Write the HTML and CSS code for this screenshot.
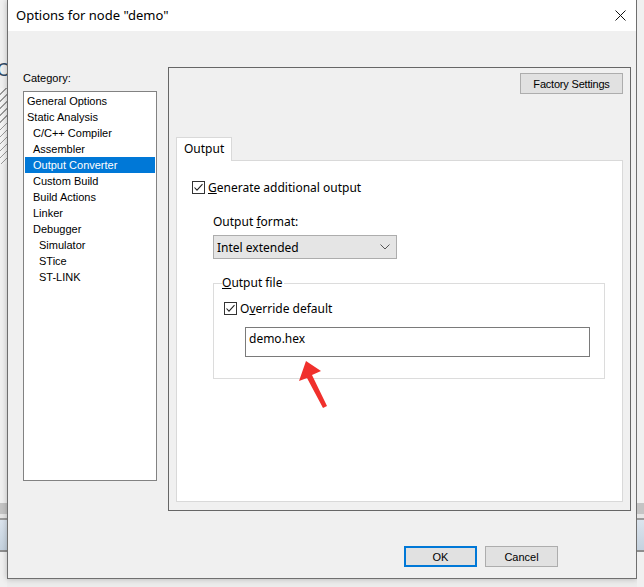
FILE: index.html
```html
<!DOCTYPE html>
<html>
<head>
<meta charset="utf-8">
<link rel="stylesheet" href="styles.css">
</head>
<body>
<div class="desk desk-left"><span class="desk-c">C</span><div class="hatch"></div></div>
<div class="dialog">
  <div class="titlebar">
    <span class="title">Options for node "demo"</span>
    <svg class="close" width="11" height="11" viewBox="0 0 11 11"><path d="M0.5 0.5 L10.5 10.5 M10.5 0.5 L0.5 10.5" stroke="#111" stroke-width="1" fill="none"/></svg>
  </div>
  <div class="body">
    <div class="main">
      <div class="leftcol">
        <div class="cat-label">Category:</div>
        <ul class="catlist">
          <li class="l0">General Options</li>
          <li class="l0">Static Analysis</li>
          <li class="l1">C/C++ Compiler</li>
          <li class="l1">Assembler</li>
          <li class="l1 sel">Output Converter</li>
          <li class="l1">Custom Build</li>
          <li class="l1">Build Actions</li>
          <li class="l1">Linker</li>
          <li class="l1">Debugger</li>
          <li class="l2">Simulator</li>
          <li class="l2">STice</li>
          <li class="l2">ST-LINK</li>
        </ul>
      </div>
      <div class="frame">
        <div class="frame-top"><button class="btn">Factory Settings</button></div>
        <div class="tabs"><div class="tab">Output</div></div>
        <div class="page">
          <label class="check first">
            <svg class="cb" width="13" height="13" viewBox="0 0 13 13"><rect x="0.5" y="0.5" width="12" height="12" fill="#fff" stroke="#333"/><path d="M2.5 6.5 L5 9.2 L10.5 3.2" stroke="#222" stroke-width="1.1" fill="none"/></svg>
            <span><u>G</u>enerate additional output</span>
          </label>
          <div class="fmt-label">Output <u>f</u>ormat:</div>
          <div class="combo"><span>Intel extended</span><svg width="10" height="6" viewBox="0 0 10 6"><path d="M0.5 0.5 L5 5 L9.5 0.5" stroke="#555" fill="none"/></svg></div>
          <fieldset class="group">
            <legend><u>O</u>utput file</legend>
            <label class="check">
              <svg class="cb" width="13" height="13" viewBox="0 0 13 13"><rect x="0.5" y="0.5" width="12" height="12" fill="#fff" stroke="#333"/><path d="M2.5 6.5 L5 9.2 L10.5 3.2" stroke="#222" stroke-width="1.1" fill="none"/></svg>
              <span>O<u>v</u>erride default</span>
            </label>
            <div class="textbox">demo.hex</div>
          </fieldset>
        </div>
      </div>
    </div>
    <div class="buttons">
      <button class="btn ok">OK</button>
      <button class="btn">Cancel</button>
    </div>
  </div>
  <svg class="arrow" width="40" height="56" viewBox="0 0 40 56"><polygon points="10,1 3,21 11,18 27,48 31,46 16,15 25,11" fill="#f0302c"/></svg>
</div>
<div class="desk desk-right"></div>
</body>
</html>
```

FILE: styles.css
```css
* { box-sizing: border-box; }
html, body { margin: 0; padding: 0; }
body {
  width: 644px;
  height: 587px;
  overflow: hidden;
  display: flex;
  align-items: flex-start;
  background: #ececec;
  font-family: "Noto Sans", "Liberation Sans", sans-serif;
  font-size: 12px;
  color: #000;
}
.desk {
  height: 587px;
  flex: 1 1 auto;
  position: relative;
  overflow: hidden;
  background:
    linear-gradient(to bottom,
      transparent 0, transparent 503px,
      #c4c4c4 503px, #c4c4c4 514px,
      #e6e6e6 514px, #e6e6e6 518px,
      #9a9a9a 518px, #9a9a9a 520px,
      #dbe4ee 520px, #c5d2df 550px,
      #8e8e8e 550px, #8e8e8e 552px,
      transparent 552px),
    #f0f0f0;
}
.desk-left { width: 7px; flex: 0 0 7px; }
.desk-c {
  position: absolute;
  left: -3px;
  top: 60px;
  font-size: 18px;
  color: #2f4a66;
  font-family: "Liberation Sans", sans-serif;
}
.hatch {
  position: absolute;
  left: 0;
  top: 88px;
  width: 7px;
  height: 76px;
  background: repeating-linear-gradient(135deg, #f4f4f4 0, #f4f4f4 4px, #9a9a9a 4px, #9a9a9a 5px);
}
.dialog {
  flex: 0 0 630px;
  width: 630px;
  height: 579px;
  position: relative;
  border: 1px solid #6f6f6f;
  border-top: none;
  background: #f0f0f0;
  box-shadow: 0 0 6px rgba(0,0,0,0.25);
}
.titlebar {
  height: 31px;
  background: #fff;
  display: flex;
  align-items: center;
  justify-content: space-between;
  padding: 0 10px 0 8px;
}
.title {
  font-size: 13px;
  line-height: 16px;
  color: #000;
  margin-top: -1px;
}
.close { margin-top: -1px; }
.body {
  display: flex;
  flex-direction: column;
}
.main {
  display: flex;
  padding-top: 36px;
}
.leftcol {
  margin-left: 15px;
  width: 134px;
  display: flex;
  flex-direction: column;
}
.cat-label {
  margin-top: 3px;
  height: 16px;
  line-height: 16px;
  font-family: "Liberation Sans", sans-serif;
  font-size: 11px;
}
.catlist {
  list-style: none;
  margin: 5px 0 0 0;
  padding: 1px;
  height: 390px;
  background: #fff;
  border: 1px solid #828282;
  font-family: "Liberation Sans", sans-serif;
  font-size: 11px;
}
.catlist li {
  height: 16px;
  line-height: 16px;
  white-space: nowrap;
}
.catlist .l0 { padding-left: 2px; }
.catlist .l1 { padding-left: 8px; }
.catlist .l2 { padding-left: 14px; }
.catlist .sel { background: #0078d7; color: #fff; }
.frame {
  margin-left: 11px;
  width: 463px;
  height: 444px;
  border: 1px solid #666;
  padding: 5px 7px 8px 7px;
  display: flex;
  flex-direction: column;
}
.frame-top {
  display: flex;
  justify-content: flex-end;
}
.btn {
  height: 21px;
  background: #e1e1e1;
  border: 1px solid #adadad;
  font-family: "Liberation Sans", sans-serif;
  font-size: 11px;
  padding: 0;
  color: #000;
}
.frame-top .btn { width: 103px; letter-spacing: -0.2px; }
.tabs {
  margin-top: 43px;
  display: flex;
  height: 23px;
}
.tab {
  width: 56px;
  height: 24px;
  background: #fff;
  border: 1px solid #d9d9d9;
  border-bottom: none;
  padding-left: 7px;
  line-height: 22px;
  font-size: 12px;
  position: relative;
  z-index: 1;
}
.page {
  flex: 1 1 auto;
  background: #fff;
  border: 1px solid #d9d9d9;
  padding: 20px 0 0 15px;
  display: flex;
  flex-direction: column;
  align-items: flex-start;
}
.check {
  display: flex;
  align-items: center;
  height: 13px;
  line-height: 16px;
  white-space: nowrap;
}
.check span { margin-top: 1px; }
.check .cb { flex: 0 0 13px; margin-right: 3px; }
.fmt-label {
  margin: 20px 0 0 21px;
  height: 16px;
  line-height: 16px;
}
.combo {
  margin: 5px 0 0 21px;
  width: 184px;
  height: 24px;
  background: #e5e5e5;
  border: 1px solid #adadad;
  display: flex;
  align-items: center;
  justify-content: space-between;
  padding: 0 6px 0 3px;
}
.group {
  margin: 16px 0 0 21px;
  width: 392px;
  border: 1px solid #dcdcdc;
  padding: 0 0 21px 10px;
  min-width: 0;
}
.group legend {
  margin-left: -2px;
  padding: 0 2px 0 0;
  line-height: 16px;
  height: 16px;
}
.group .check { margin-top: 11px; }
.textbox {
  margin: 12px 0 0 21px;
  width: 345px;
  height: 30px;
  border: 1px solid #7a7a7a;
  background: #fff;
  padding: 3px 0 0 3px;
  line-height: 16px;
}
.buttons {
  display: flex;
  justify-content: flex-end;
  gap: 8px;
  padding-right: 78px;
  margin-top: 35px;
}
.buttons .btn { width: 73px; }
.btn.ok { border: 2px solid #0078d7; }
.arrow {
  position: absolute;
  left: 288px;
  top: 360px;
}
```
